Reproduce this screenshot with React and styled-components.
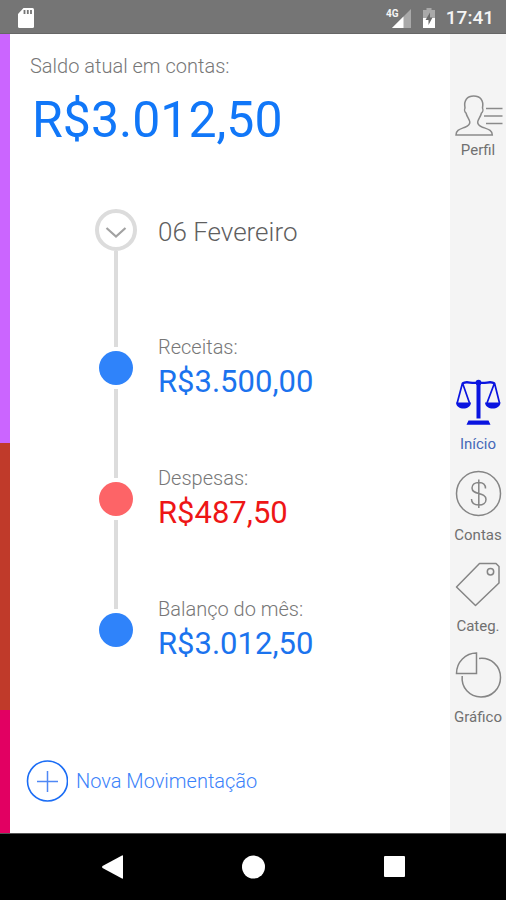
import React from 'react';
import styled, { createGlobalStyle } from 'styled-components';

const GlobalStyle = createGlobalStyle`
* {
    box-sizing: border-box;
}
body {
    margin: 0;
    font-family: Roboto, "Liberation Sans", sans-serif;
    background: #ffffff;
}
button {
    font-family: inherit;
    border: none;
    background: none;
    padding: 0;
    cursor: pointer;
}
`

const Page = styled.div`
display: flex;
flex-direction: column;
min-height: 100vh;
`

const StatusBar = styled.header`
display: flex;
align-items: center;
height: 34px;
padding: 2px 12px 0 16px;
background: #757575;
border-bottom: 1px solid #666666;
color: #f5f5f5;
`

const StatusIcons = styled.div`
display: flex;
align-items: center;
gap: 10px;
margin-left: auto;
`

const Clock = styled.time`
font-size: 19px;
line-height: 24px;
font-weight: 500;
`

const Screen = styled.div`
display: flex;
flex: 1;
`

const ColorStrip = styled.div`
display: flex;
flex-direction: column;
width: 10px;
`

const StripPart = styled.div`
flex: ${props => props.$share};
background: ${props => props.$color};
`

const Content = styled.main`
display: flex;
flex-direction: column;
flex: 1;
padding: 20px 16px 31px 20px;
`

const BalanceLabel = styled.h1`
margin: 0;
font-size: 20px;
line-height: 24px;
font-weight: 300;
color: #777777;
`

const BalanceValue = styled.p`
margin: 12px 0 0;
padding-left: 2px;
font-size: 50px;
line-height: 60px;
color: #1177f8;
`

const Timeline = styled.ul`
list-style: none;
margin: 59px 0 0;
padding: 0 0 0 65px;
`

const TimelineItem = styled.li`
display: flex;
gap: 21px;
height: ${props => props.$first ? '93px' : '131px'};
`

const Track = styled.div`
display: flex;
flex-direction: column;
align-items: center;
width: 42px;
`

const Line = styled.span`
flex: 1;
width: 4px;
background: ${props => props.$hidden ? 'transparent' : '#dcdcdc'};
`

const Dot = styled.span`
width: 34px;
height: 34px;
margin: 4px 0;
border-radius: 50%;
background: ${props => props.$color};
`

const MonthButton = styled.button`
display: flex;
align-items: center;
justify-content: center;
width: 42px;
height: 42px;
border: 4px solid #dcdcdc;
border-radius: 50%;
`

const MonthTitle = styled.h2`
margin: 0;
font-size: 26px;
line-height: 46px;
font-weight: 300;
color: #5f5f5f;
`

const Entry = styled.div`
align-self: center;
`

const EntryLabel = styled.h3`
margin: 0;
font-size: 20px;
line-height: 24px;
font-weight: 300;
color: #777777;
`

const EntryValue = styled.p`
margin: 4px 0 0;
font-size: 31px;
line-height: 38px;
color: ${props => props.$color};
`

const NewButton = styled.button`
display: flex;
align-items: center;
align-self: flex-start;
gap: 8px;
margin-top: auto;
margin-left: -4px;
font-size: 20px;
line-height: 24px;
font-weight: 300;
color: #3b82fa;
`

const SideMenu = styled.nav`
display: flex;
flex-direction: column;
width: 56px;
padding: 59px 0 107px;
background: #f4f4f4;
`

const MenuGroup = styled.div`
display: flex;
flex-direction: column;
gap: 17px;
margin-top: auto;
`

const MenuLink = styled.a`
display: flex;
flex-direction: column;
align-items: center;
gap: ${props => props.$tight ? '0px' : '8px'};
font-size: 15px;
line-height: 18px;
text-decoration: none;
color: ${props => props.$active ? '#4668b8' : '#707070'};
`

const NavBar = styled.footer`
display: flex;
justify-content: center;
height: 67px;
background: #000000;
border-top: 1px solid #555555;
`

const NavButton = styled.button`
display: flex;
align-items: center;
justify-content: center;
width: 28%;
`

const SdIcon = () => (
    <svg width="20" height="24" viewBox="0 0 20 24" aria-hidden="true">
        <path d="M7.5 2H16.5Q18 2 18 3.500V20.500Q18 22 16.500 22H3.500Q2 22 2 20.500V8Z" fill="#ffffff" />
        <path d="M8.500 4V8M11.800 4V8M15 4V8" stroke="#757575" strokeWidth="1.800" />
    </svg>
)

const SignalIcon = () => (
    <svg width="28" height="24" viewBox="0 0 28 24" aria-label="4G">
        <path d="M27 3V22H8Z" fill="#a9a9a9" />
        <path d="M19.500 10.500V22H8Z" fill="#ffffff" />
        <text x="2" y="11" fontSize="10" fontWeight="700" fill="#f5f5f5">4G</text>
    </svg>
)

const BatteryIcon = () => (
    <svg width="14" height="24" viewBox="0 0 14 24" aria-hidden="true">
        <path d="M1 4H4.500V2H9.500V4H13V12H1Z" fill="#a9a9a9" />
        <path d="M1 12H13V22H1Z" fill="#ffffff" />
        <path d="M8 6.500L3.500 14H6.500V19L10.500 11.500H8Z" fill="#6b6b6b" />
    </svg>
)

const ChevronIcon = () => (
    <svg width="24" height="24" viewBox="0 0 24 24" fill="none" stroke="#a2a2a2" strokeWidth="2.200">
        <path d="M2.500 10L12 18.500L21.500 10" />
    </svg>
)

const PlusIcon = () => (
    <svg width="42" height="42" viewBox="0 0 42 42" fill="none" stroke="#1b6df5">
        <circle cx="21.500" cy="21" r="20" strokeWidth="1.600" />
        <path d="M11 21.500H32M21.500 11V32" strokeWidth="1.500" stroke="#4f88f5" />
    </svg>
)

const ProfileIcon = () => (
    <svg width="56" height="48" viewBox="0 0 56 48" fill="none" stroke="#8a8a8a" strokeWidth="1.500">
        <path d="M6 42C6 37 10 36.200 15 34.200C18.500 32.800 20 31.500 19.800 29C19.500 26.500 17 24 16 20C14.500 19 14.300 16.500 15 15C13.500 7 17.500 3 23.700 3C30 3 34 7 32.500 15C33.200 16.500 33 19 31.500 20C30.500 24 28 26.500 27.700 29C27.500 31.500 29 32.800 32.500 34.200C38 36.200 42.300 37 42.300 42Z" />
        <path d="M36 15.500H52.500M34 23H52.500M36 30.500H52.500" />
    </svg>
)

const ScaleIcon = () => (
    <svg width="48" height="48" viewBox="0 0 48 48" fill="none" stroke="#0a14e0" strokeWidth="1.700">
        <path d="M8.500 4.500C13 1 17 5.500 24.500 3.500C32 5.500 36 1 40.500 4.500" strokeWidth="2.300" />
        <circle cx="24.500" cy="3.600" r="2.900" fill="#0a14e0" stroke="none" />
        <path d="M22.500 4H26.500V39.500H22.500Z" fill="#0a14e0" stroke="none" />
        <path d="M14.500 41.500H34.500L36.500 45.700H12.500Z" fill="#0a14e0" stroke="none" />
        <path d="M8.500 4L3.200 24M8.500 4L15.500 24M40.500 4L33 24M40.500 4L45.500 24" />
        <path d="M2 23.500H17C16.500 31.500 2.500 31.500 2 23.500ZM31 23.500H46.500C46 31.500 31.500 31.500 31 23.500Z" fill="#0a14e0" stroke="none" />
    </svg>
)

const CoinIcon = () => (
    <svg width="48" height="48" viewBox="0 0 48 48" fill="none" stroke="#858585" strokeWidth="1.500">
        <circle cx="24.500" cy="23.500" r="22" />
        <path d="M31.500 18.500C31.500 14.500 28.500 12.500 24.800 12.500C21 12.500 18 14.500 18 18C18 25.500 32 21.500 32 29.500C32 33 29 35 25 35C20.500 35 17.500 33 17.500 29M24.800 9.500V38" />
    </svg>
)

const TagIcon = () => (
    <svg width="48" height="48" viewBox="0 0 48 48" fill="none" stroke="#858585" strokeWidth="1.500" strokeLinejoin="round">
        <path d="M25.500 2.500H42L45 5.500V22L21.500 44.500L2.500 26Z" />
        <circle cx="36.500" cy="10.700" r="3.200" />
    </svg>
)

const ChartIcon = () => (
    <svg width="48" height="48" viewBox="0 0 48 48" fill="none" stroke="#858585" strokeWidth="1.500">
        <path d="M22.500 1V21.500H2.500C2.500 10 11.500 1 22.500 1Z" />
        <path d="M25 6.500C37 5 46.500 14 46.500 25.500C46.500 36.500 38 45 27 45C15.500 45 7 35.500 8.200 24" />
    </svg>
)

const entries = [
    { label: 'Receitas:', value: 'R$3.500,00', dot: '#2f83fa', color: '#1b73ee' },
    { label: 'Despesas:', value: 'R$487,50', dot: '#fd6467', color: '#ee1616' },
    { label: 'Balanço do mês:', value: 'R$3.012,50', dot: '#2f83fa', color: '#1b73ee' },
]

const menu = [
    { label: 'Início', icon: <ScaleIcon />, active: true },
    { label: 'Contas', icon: <CoinIcon /> },
    { label: 'Categ.', icon: <TagIcon /> },
    { label: 'Gráfico', icon: <ChartIcon /> },
]

export default function App() {
    return (
        <Page>
            <GlobalStyle />
            <StatusBar>
                <SdIcon />
                <StatusIcons>
                    <SignalIcon />
                    <BatteryIcon />
                    <Clock>17:41</Clock>
                </StatusIcons>
            </StatusBar>
            <Screen>
                <ColorStrip>
                    <StripPart $share={409} $color="#cb65ff" />
                    <StripPart $share={267} $color="#c03a2a" />
                    <StripPart $share={123} $color="#e20062" />
                </ColorStrip>
                <Content>
                    <BalanceLabel>Saldo atual em contas:</BalanceLabel>
                    <BalanceValue>R$3.012,50</BalanceValue>
                    <Timeline>
                        <TimelineItem $first>
                            <Track>
                                <MonthButton aria-label="Escolher mês"><ChevronIcon /></MonthButton>
                                <Line />
                            </Track>
                            <MonthTitle>06 Fevereiro</MonthTitle>
                        </TimelineItem>
                        {entries.map((entry, index) => (
                            <TimelineItem key={entry.label}>
                                <Track>
                                    <Line />
                                    <Dot $color={entry.dot} />
                                    <Line $hidden={index === entries.length - 1} />
                                </Track>
                                <Entry>
                                    <EntryLabel>{entry.label}</EntryLabel>
                                    <EntryValue $color={entry.color}>{entry.value}</EntryValue>
                                </Entry>
                            </TimelineItem>
                        ))}
                    </Timeline>
                    <NewButton>
                        <PlusIcon />
                        Nova Movimentação
                    </NewButton>
                </Content>
                <SideMenu>
                    <MenuLink href="#perfil" $tight>
                        <ProfileIcon />
                        Perfil
                    </MenuLink>
                    <MenuGroup>
                        {menu.map(item => (
                            <MenuLink key={item.label} href={`#${item.label}`} $active={item.active}>
                                {item.icon}
                                {item.label}
                            </MenuLink>
                        ))}
                    </MenuGroup>
                </SideMenu>
            </Screen>
            <NavBar>
                <NavButton aria-label="Voltar">
                    <svg width="24" height="24" viewBox="0 0 24 24"><path d="M24 1V23Q24 24 23 23.500L3.500 13Q2.500 12 3.500 11L23 0.500Q24 0 24 1Z" fill="#ffffff" /></svg>
                </NavButton>
                <NavButton aria-label="Tela inicial">
                    <svg width="24" height="24" viewBox="0 0 24 24"><circle cx="12.500" cy="12" r="11.500" fill="#ffffff" /></svg>
                </NavButton>
                <NavButton aria-label="Aplicativos recentes">
                    <svg width="24" height="24" viewBox="0 0 24 24"><rect x="1" y="1" width="21" height="21" rx="1" fill="#ffffff" /></svg>
                </NavButton>
            </NavBar>
        </Page>
    )
}
